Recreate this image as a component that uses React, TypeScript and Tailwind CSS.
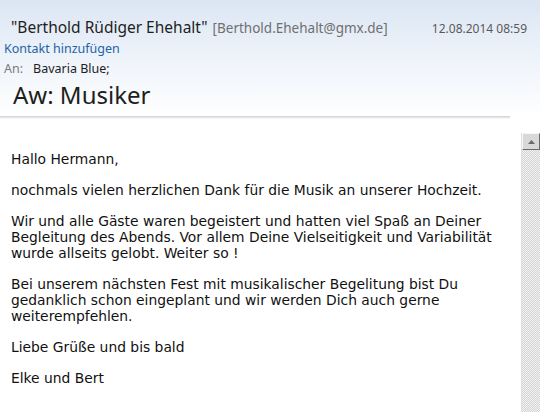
import React from 'react'

const bodyParagraphs: string[][] = [
  ['Hallo Hermann,'],
  ['nochmals vielen herzlichen Dank für die Musik an unserer Hochzeit.'],
  [
    'Wir und alle Gäste waren begeistert und hatten viel Spaß an Deiner',
    'Begleitung des Abends. Vor allem Deine Vielseitigkeit und Variabilität',
    'wurde allseits gelobt. Weiter so !',
  ],
  [
    'Bei unserem nächsten Fest mit musikalischer Begelitung bist Du',
    'gedanklich schon eingeplant und wir werden Dich auch gerne',
    'weiterempfehlen.',
  ],
  ['Liebe Grüße und bis bald'],
  ['Elke und Bert'],
]

const MailHeader: React.FC = () => (
  <div className="relative h-[116px] bg-gradient-to-b from-[#dbe6f3] via-[#eef3fa] to-white font-['Noto_Sans',sans-serif]">
    <div className="flex h-[20px] items-baseline pl-[11px] pr-[13px] mt-[17px] leading-[20px]">
      <span className="text-[15.5px] text-[#1e1e1e]">"Berthold Rüdiger Ehehalt"</span>
      <span className="ml-[5px] text-[13.5px] text-[#6f6f6f]">[Berthold.Ehehalt@gmx.de]</span>
      <span className="ml-auto text-[12px] text-[#5a5a5a]">12.08.2014 08:59</span>
    </div>
    <div className="mt-[4px] h-[16px] pl-[4px] text-[12.5px] leading-[16px] text-[#2463a6]">Kontakt hinzufügen</div>
    <div className="mt-[4px] flex h-[16px] items-baseline pl-[4px] text-[12.5px] leading-[16px]">
      <span className="text-[#7a7a7a]">An:</span>
      <span className="ml-[10px] text-[#1e1e1e]">Bavaria Blue;</span>
    </div>
    <div className="mt-[3px] h-[30px] pl-[13px] text-[24px] leading-[30px] text-[#1e1e1e]">Aw: Musiker</div>
    <div className="absolute bottom-[-3px] left-0 right-[30px] h-[3px] bg-gradient-to-b from-[#c9ced6] to-transparent" />
  </div>
)

const Scrollbar: React.FC = () => (
  <div className="flex w-[19px] flex-col border-l border-[#e0e0e0]">
    <div className="flex h-[17px] items-center justify-center border border-[#f6f6f6] border-r-[#6a6a6a] border-b-[#6a6a6a] bg-[#d8d8d8]">
      <svg width="7" height="4" viewBox="0 0 7 4">
        <path d="M0 4 L3.5 0 L7 4 Z" fill="#6a6a6a" />
      </svg>
    </div>
    <div className="flex-1 bg-[repeating-conic-gradient(#d4d4d4_0_25%,#f2f2f2_0_50%)] bg-[length:2px_2px]" />
  </div>
)

export default function App() {
  return (
    <div className="flex h-[412px] w-[540px] flex-col overflow-hidden bg-white">
      <MailHeader />
      <div className="flex flex-1 pt-[17px]">
        <div className="flex-1 pl-[11px] pt-[18px] font-['DejaVu_Sans',Verdana,sans-serif] text-[13.85px] leading-[16px] text-[#111]">
          {bodyParagraphs.map((lines, i) => (
            <div key={i} className="mb-[15px]">
              {lines.map((line, j) => (
                <div key={j} className="h-[16px] whitespace-nowrap">
                  {line}
                </div>
              ))}
            </div>
          ))}
        </div>
        <Scrollbar />
      </div>
    </div>
  )
}
